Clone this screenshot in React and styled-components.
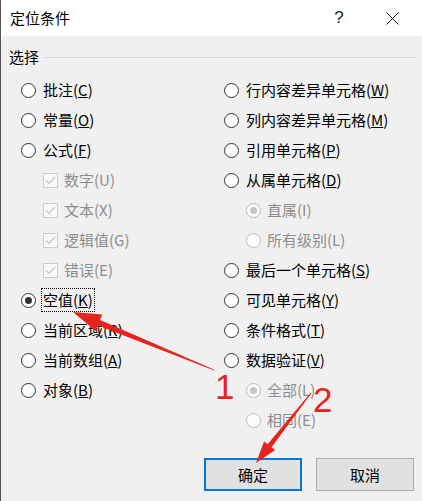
import React from "react";
import styled, { createGlobalStyle } from "styled-components";

const Global = createGlobalStyle`
  html, body { margin: 0; padding: 0; background: #f0f0f0; }
  body { font-family: "Noto Sans CJK SC", "Noto Sans", sans-serif; }
`;

const Window = styled.div`
  position: relative;
  width: 422px;
  height: 501px;
  box-sizing: border-box;
  border-left: 1px solid #555;
  background: #f0f0f0;
  overflow: hidden;
  font-size: 15px;
  color: #000;
`;

const TitleBar = styled.div`
  height: 36px;
  background: #fff;
  display: flex;
  align-items: center;
  padding-left: 9px;
`;

const Title = styled.div`
  flex: 1;
  font-size: 15px;
  line-height: 20px;
`;

const Help = styled.div`
  width: 20px;
  text-align: center;
  font-family: "Liberation Sans", sans-serif;
  font-size: 17px;
  color: #222;
  margin-right: 37px;
`;

const CloseBtn = styled.div`
  width: 13px;
  height: 13px;
  margin-right: 23px;
  display: flex;
`;

const Body = styled.div`
  padding-top: 11px;
`;

const Legend = styled.div`
  display: flex;
  align-items: center;
  height: 20px;
  padding-left: 8px;
  padding-right: 7px;
  gap: 5px;
  line-height: 20px;
`;

const Rule = styled.div`
  flex: 1;
  height: 1px;
  background: #d5d5d5;
`;

const Columns = styled.div`
  display: grid;
  grid-template-columns: 203px 1fr;
  padding-left: 20px;
  margin-top: 8px;
`;

const Column = styled.div`
  display: flex;
  flex-direction: column;
`;

const Row = styled.div`
  height: 30px;
  display: flex;
  align-items: center;
  gap: ${(p) => (p.$indent ? 5 : 6)}px;
  padding-left: ${(p) => (p.$indent ? 22 : 0)}px;
  color: ${(p) => (p.$disabled ? "#8d8d8d" : "#000")};
  white-space: nowrap;
`;

const RadioCircle = styled.span`
  width: 15px;
  height: 15px;
  box-sizing: border-box;
  border-radius: 50%;
  border: 1px solid ${(p) => (p.$disabled ? "#bdbdbd" : "#333")};
  background: ${(p) => (p.$disabled ? "#fcfcfc" : "#fff")};
  display: flex;
  align-items: center;
  justify-content: center;
  flex: none;
  &::after {
    content: "";
    display: ${(p) => (p.$checked ? "block" : "none")};
    width: 7px;
    height: 7px;
    border-radius: 50%;
    background: ${(p) => (p.$disabled ? "#c4c4c4" : "#333")};
  }
`;

const CheckBox = styled.span`
  width: 15px;
  height: 15px;
  box-sizing: border-box;
  border: 1px solid #cccccc;
  background: #f9f9f9;
  display: flex;
  align-items: center;
  justify-content: center;
  flex: none;
`;

const Label = styled.span`
  line-height: 20px;
  padding: 1px;
  margin-left: -1px;
  border: 1px dotted ${(p) => (p.$focused ? "#000" : "transparent")};
`;

const Buttons = styled.div`
  display: flex;
  justify-content: flex-end;
  gap: 14px;
  padding-right: 8px;
  margin-top: 23px;
`;

const Button = styled.div`
  width: 98px;
  height: 33px;
  box-sizing: border-box;
  display: flex;
  align-items: center;
  justify-content: center;
  background: #e1e1e1;
  border: ${(p) => (p.$primary ? "2px solid #0078d7" : "1px solid #adadad")};
  font-size: 15px;
`;

const Overlay = styled.svg`
  position: absolute;
  left: 0;
  top: 0;
  pointer-events: none;
`;

const Num = styled.div`
  position: absolute;
  font-family: "Liberation Sans", sans-serif;
  font-size: 35px;
  line-height: 1;
  color: #e8231e;
`;

function Mn({ text, k }) {
  return (
    <>
      {text}(<u>{k}</u>)
    </>
  );
}

function RadioRow({ label, k, checked, disabled, indent, focused }) {
  return (
    <Row $indent={indent} $disabled={disabled}>
      <RadioCircle $checked={checked} $disabled={disabled} />
      <Label $focused={focused}>
        {disabled ? `${label}(${k})` : <Mn text={label} k={k} />}
      </Label>
    </Row>
  );
}

function CheckRow({ label, k }) {
  return (
    <Row $indent $disabled>
      <CheckBox>
        <svg width="11" height="9" viewBox="0 0 11 9">
          <path d="M1 4.5 L4 7.5 L10 1" fill="none" stroke="#c6c6c6" strokeWidth="1.2" />
        </svg>
      </CheckBox>
      <Label>{`${label}(${k})`}</Label>
    </Row>
  );
}

export default function App() {
  return (
    <>
      <Global />
      <Window>
        <TitleBar>
          <Title>定位条件</Title>
          <Help>?</Help>
          <CloseBtn>
            <svg width="13" height="13" viewBox="0 0 13 13">
              <path d="M0.5 0.5 L12.5 12.5 M12.5 0.5 L0.5 12.5" stroke="#111" strokeWidth="1" />
            </svg>
          </CloseBtn>
        </TitleBar>
        <Body>
          <Legend>
            <span>选择</span>
            <Rule />
          </Legend>
          <Columns>
            <Column>
              <RadioRow label="批注" k="C" />
              <RadioRow label="常量" k="O" />
              <RadioRow label="公式" k="F" />
              <CheckRow label="数字" k="U" />
              <CheckRow label="文本" k="X" />
              <CheckRow label="逻辑值" k="G" />
              <CheckRow label="错误" k="E" />
              <RadioRow label="空值" k="K" checked focused />
              <RadioRow label="当前区域" k="R" />
              <RadioRow label="当前数组" k="A" />
              <RadioRow label="对象" k="B" />
            </Column>
            <Column>
              <RadioRow label="行内容差异单元格" k="W" />
              <RadioRow label="列内容差异单元格" k="M" />
              <RadioRow label="引用单元格" k="P" />
              <RadioRow label="从属单元格" k="D" />
              <RadioRow label="直属" k="I" indent disabled checked />
              <RadioRow label="所有级别" k="L" indent disabled />
              <RadioRow label="最后一个单元格" k="S" />
              <RadioRow label="可见单元格" k="Y" />
              <RadioRow label="条件格式" k="T" />
              <RadioRow label="数据验证" k="V" />
              <RadioRow label="全部" k="L" indent disabled checked />
              <RadioRow label="相同" k="E" indent disabled />
            </Column>
          </Columns>
          <Buttons>
            <Button $primary>确定</Button>
            <Button>取消</Button>
          </Buttons>
        </Body>
        <Overlay width="422" height="501" viewBox="0 0 422 501">
          <polygon
            points="213.2,370.5 212.8,369.5 99.1,319.9 101.4,314.4 72,312 94.6,331 96.9,325.5"
            fill="#e8231e"
          />
          <polygon
            points="310.4,393.3 309.6,392.7 266.6,444.2 263.1,441.4 255,463 274.1,450 270.6,447.2"
            fill="#e8231e"
          />
        </Overlay>
        <Num style={{ left: 214, top: 369 }}>1</Num>
        <Num style={{ left: 312, top: 382 }}>2</Num>
      </Window>
    </>
  );
}
